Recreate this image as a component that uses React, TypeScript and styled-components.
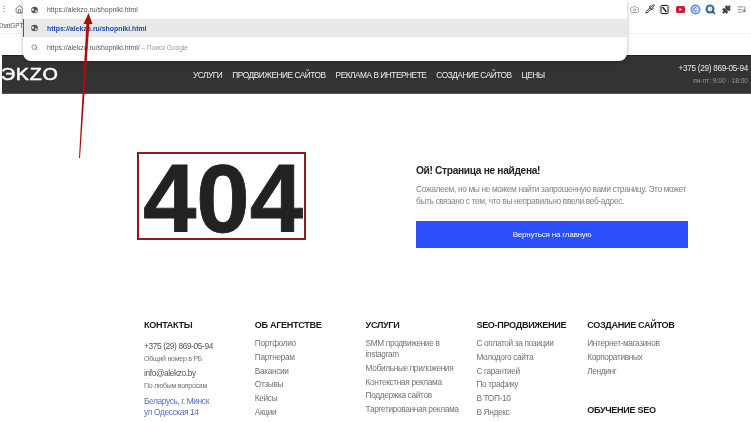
import React from "react";
import styled, { createGlobalStyle } from "styled-components";
import { House, Camera, Pipette, Puzzle, Search, ListMusic } from "lucide-react";

const Global = createGlobalStyle`
  html, body { margin: 0; padding: 0; background: #fff; }
  body { width: 751px; height: 422px; overflow: hidden; font-family: "Liberation Sans", Arial, sans-serif; }
  a { text-decoration: none; color: inherit; }
`;

const Page = styled.div`
  position: relative;
  width: 751px;
  height: 422px;
  overflow: hidden;
  background: #fff;
  filter: blur(0.25px);
`;

const BrowserBar = styled.div`
  height: 33px;
  border-bottom: 1px solid #f1f1f1;
  position: relative;
`;

const ToolRow = styled.div`
  height: 18px;
  display: flex;
  align-items: center;
  justify-content: space-between;
`;

const LeftTools = styled.div`
  display: flex;
  align-items: center;
  gap: 7px;
  color: #444;
`;

const Dots = styled.span`
  font-size: 8px;
  color: #555;
  line-height: 1;
`;

const RightTools = styled.div`
  display: flex;
  align-items: center;
  padding-right: 2px;
`;

const ToolSlot = styled.span`
  width: 15.3px;
  height: 15px;
  display: flex;
  align-items: center;
  justify-content: center;
`;

const BookmarkRow = styled.div`
  height: 15px;
  display: flex;
  align-items: center;
  font-size: 6.3px;
  color: #555;
  margin-left: -3px;
`;

const Omnibox = styled.div`
  position: absolute;
  left: 23px;
  top: 0;
  width: 604px;
  height: 61px;
  background: #fff;
  border-radius: 0 0 8px 8px;
  box-shadow: 0 1px 4px rgba(0, 0, 0, 0.28);
  z-index: 3;
  display: flex;
  flex-direction: column;
`;

const OmniRow = styled.div<{ $active?: boolean; $h: number }>`
  height: ${(p) => p.$h}px;
  display: flex;
  align-items: center;
  gap: 9px;
  padding-left: 7px;
  box-sizing: border-box;
  background: ${(p) => (p.$active ? "#e9e9e9" : "transparent")};
  border-left: 1.5px solid ${(p) => (p.$active ? "#2a5bc4" : "transparent")};
  font-size: 6.9px;
  color: #555;
  white-space: nowrap;
`;

const OmniIcon = styled.span`
  width: 7px;
  display: flex;
  justify-content: center;
  color: #666;
`;

const OmniLink = styled.span`
  color: #1d4a9e;
  font-weight: 700;
`;

const OmniHint = styled.span`
  color: #999;
  font-size: 6.5px;
`;

const SiteHeader = styled.header`
  margin: 21px 0 0 2px;
  height: 39px;
  box-sizing: border-box;
  background: #333;
  border-top: 1px solid #222;
  border-bottom: 1px solid #555;
  display: flex;
  align-items: center;
  color: #fff;
  overflow: hidden;
`;

const LogoSlot = styled.div`
  width: 191px;
  flex: none;
`;

const Logo = styled.div`
  font-size: 17px;
  line-height: 20px;
  margin-left: -1px;
  letter-spacing: 0.6px;
  -webkit-text-stroke: 0.5px #fff;
  white-space: nowrap;
  transform: scaleX(1.16);
  transform-origin: left center;
`;

const Nav = styled.nav`
  display: flex;
  gap: 10px;
  flex: 1;
  font-size: 8.3px;
  letter-spacing: -0.47px;
  color: #eee;
  white-space: nowrap;
`;

const HeaderContact = styled.div`
  text-align: right;
  padding-right: 3px;
  margin-top: -1px;
`;

const HeaderPhone = styled.div`
  font-size: 8.2px;
  letter-spacing: -0.28px;
  color: #e6e6e6;
  line-height: 12px;
`;

const HeaderHours = styled.div`
  font-size: 6.6px;
  color: #999;
  line-height: 11px;
`;

const Main = styled.main`
  display: flex;
  align-items: flex-start;
  margin-top: 58px;
  padding-left: 137px;
`;

const ErrorBox = styled.div`
  width: 169px;
  height: 88px;
  box-sizing: border-box;
  border: 2px solid #8f1d1d;
  padding: 5px 0 0 3px;
  display: flex;
  align-items: center;
  justify-content: center;
  font-size: 96px;
  font-weight: 700;
  color: #222;
  line-height: 1;
  -webkit-text-stroke: 0.8px #222;
`;

const Message = styled.div`
  width: 272px;
  margin-left: 110px;
  padding-top: 13px;
`;

const Title = styled.h1`
  margin: 0;
  font-size: 10.2px;
  letter-spacing: -0.33px;
  line-height: 12px;
  font-weight: 700;
  color: #222;
`;

const Text = styled.p`
  margin: 6px 0 0;
  font-size: 8.4px;
  letter-spacing: -0.36px;
  line-height: 12px;
  color: #7f838c;
`;

const BackButton = styled.a`
  display: flex;
  align-items: center;
  justify-content: center;
  height: 27px;
  margin-top: 14px;
  background: #2b50fb;
  color: #f2f4ff;
  font-size: 8.1px;
  letter-spacing: -0.25px;
`;

const Footer = styled.footer`
  display: grid;
  grid-template-columns: repeat(5, 110.8px);
  margin-top: 71px;
  padding-left: 144px;
`;

const Column = styled.div`
  display: flex;
  flex-direction: column;
`;

const Heading = styled.h3<{ $gap?: number }>`
  margin: ${(p) => p.$gap ?? 0}px 0 0;
  font-size: 9.1px;
  line-height: 12px;
  font-weight: 700;
  color: #1c1c1c;
  letter-spacing: -0.33px;
  white-space: nowrap;
`;

const LinkList = styled.div`
  display: flex;
  flex-direction: column;
  margin-top: 7px;
  padding-right: 14px;
`;

const FootLink = styled.a`
  font-size: 8.3px;
  letter-spacing: -0.35px;
  line-height: 11px;
  padding-bottom: 2.8px;
  color: #737373;
`;

const ContactMain = styled.div<{ $top: number }>`
  margin-top: ${(p) => p.$top}px;
  font-size: 8.4px;
  letter-spacing: -0.4px;
  line-height: 11px;
  color: #555;
`;

const ContactNote = styled.div`
  margin-top: 2px;
  font-size: 7px;
  letter-spacing: -0.25px;
  line-height: 10px;
  color: #707070;
`;

const Address = styled.div`
  margin-top: 5px;
  font-size: 8.4px;
  letter-spacing: -0.4px;
  line-height: 11px;
  color: #5570c0;
`;

const ArrowLayer = styled.svg`
  position: absolute;
  left: 0;
  top: 0;
  z-index: 5;
  pointer-events: none;
`;

const NBox = () => (
  <svg width="13" height="13" viewBox="0 0 13 13">
    <circle cx="6.5" cy="6.5" r="6.3" fill="#e6e8ee" />
    <rect x="3" y="2.5" width="7" height="8" rx="1" fill="#fff" stroke="#222" strokeWidth="1" />
    <path d="M4.6 4 L8.4 9" stroke="#222" strokeWidth="1.5" />
  </svg>
);

const RedPlay = () => (
  <svg width="9" height="7" viewBox="0 0 9 7">
    <rect width="9" height="7" rx="1.5" fill="#c8202a" />
    <path d="M3.4 1.8 L6 3.5 L3.4 5.2 Z" fill="#fff" />
  </svg>
);

const BlueC = () => (
  <svg width="11" height="11" viewBox="0 0 11 11">
    <circle cx="5.5" cy="5.5" r="5" fill="#5c93e6" />
    <circle cx="5.5" cy="5.5" r="3.2" fill="#eef3fb" />
    <path d="M6.8 4.3 A1.8 1.8 0 1 0 6.8 6.7" fill="none" stroke="#23457f" strokeWidth="0.9" />
  </svg>
);

const GlobeBadge = () => (
  <svg width="11" height="11" viewBox="0 0 11 11">
    <circle cx="5" cy="5" r="4.5" fill="#3c6f88" />
    <circle cx="5" cy="5" r="2.4" fill="#dfe8ee" />
    <path d="M7 7 L10 10" stroke="#29485a" strokeWidth="1.5" />
  </svg>
);

const DarkGlobe = () => (
  <svg width="8" height="8" viewBox="0 0 8 8">
    <circle cx="4" cy="4" r="3.8" fill="#555" />
    <path d="M1 2.6 Q3 2 3.6 3.4 L2.6 5 L1 4.2 Z M4.8 4.4 L7 4.6 L5.6 7 L4.6 6 Z" fill="#f1f1f1" />
  </svg>
);

const nav = ["УСЛУГИ", "ПРОДВИЖЕНИЕ САЙТОВ", "РЕКЛАМА В ИНТЕРНЕТЕ", "СОЗДАНИЕ САЙТОВ", "ЦЕНЫ"];

const App: React.FC = () => (
  <Page>
    <Global />
    <BrowserBar>
      <ToolRow>
        <LeftTools>
          <Dots>⋮</Dots>
          <House size={9} strokeWidth={1.8} />
        </LeftTools>
        <RightTools>
          <ToolSlot><Camera size={9} color="#888" strokeWidth={2} /></ToolSlot>
          <ToolSlot><Pipette size={10} color="#222" strokeWidth={2.4} /></ToolSlot>
          <ToolSlot><NBox /></ToolSlot>
          <ToolSlot><RedPlay /></ToolSlot>
          <ToolSlot><BlueC /></ToolSlot>
          <ToolSlot><GlobeBadge /></ToolSlot>
          <ToolSlot><Puzzle size={9} color="#444" fill="#444" /></ToolSlot>
          <ToolSlot><ListMusic size={9} color="#666" strokeWidth={2} /></ToolSlot>
        </RightTools>
      </ToolRow>
      <BookmarkRow>ChatGPT</BookmarkRow>
    </BrowserBar>
    <Omnibox>
      <OmniRow $h={19}>
        <OmniIcon><DarkGlobe /></OmniIcon>
        https://alekzo.ru/shopniki.html
      </OmniRow>
      <OmniRow $active $h={18}>
        <OmniIcon><DarkGlobe /></OmniIcon>
        <OmniLink>https://alekzo.ru/shopniki.html</OmniLink>
      </OmniRow>
      <OmniRow $h={20}>
        <OmniIcon><Search size={7} strokeWidth={2.4} /></OmniIcon>
        <span>https://alekzo.ru/shopniki.html/ <OmniHint>– Поиск Google</OmniHint></span>
      </OmniRow>
    </Omnibox>

    <SiteHeader>
      <LogoSlot><Logo>ЭKZO</Logo></LogoSlot>
      <Nav>
        {nav.map((n) => <a key={n}>{n}</a>)}
      </Nav>
      <HeaderContact>
        <HeaderPhone>+375 (29) 869-05-94</HeaderPhone>
        <HeaderHours>пн-пт: 9:00 - 18:00</HeaderHours>
      </HeaderContact>
    </SiteHeader>

    <Main>
      <ErrorBox>404</ErrorBox>
      <Message>
        <Title>Ой! Страница не найдена!</Title>
        <Text>Сожалеем, но мы не можем найти запрошенную вами страницу. Это может быть связано с тем, что вы неправильно ввели веб-адрес.</Text>
        <BackButton>Вернуться на главную</BackButton>
      </Message>
    </Main>

    <Footer>
      <Column>
        <Heading>КОНТАКТЫ</Heading>
        <ContactMain $top={10}>+375 (29) 869-05-94</ContactMain>
        <ContactNote>Общий номер в РБ</ContactNote>
        <ContactMain $top={4}>info@alekzo.by</ContactMain>
        <ContactNote>По любым вопросам</ContactNote>
        <Address>Беларусь, г. Минск<br />ул Одесская 14</Address>
        <ContactNote>Бизнес-центр</ContactNote>
      </Column>
      <Column>
        <Heading>ОБ АГЕНТСТВЕ</Heading>
        <LinkList>
          {["Портфолио", "Партнерам", "Вакансии", "Отзывы", "Кейсы", "Акции", "Блог"].map((t) => <FootLink key={t}>{t}</FootLink>)}
        </LinkList>
      </Column>
      <Column>
        <Heading>УСЛУГИ</Heading>
        <LinkList>
          {["SMM продвижение в instagram", "Мобильные приложения", "Контекстная реклама", "Поддержка сайтов", "Таргетированная реклама"].map((t) => <FootLink key={t}>{t}</FootLink>)}
        </LinkList>
      </Column>
      <Column>
        <Heading>SEO-ПРОДВИЖЕНИЕ</Heading>
        <LinkList>
          {["С оплатой за позиции", "Молодого сайта", "С гарантией", "По трафику", "В ТОП-10", "В Яндекс"].map((t) => <FootLink key={t}>{t}</FootLink>)}
        </LinkList>
      </Column>
      <Column>
        <Heading>СОЗДАНИЕ САЙТОВ</Heading>
        <LinkList>
          {["Интернет-магазинов", "Корпоративных", "Лендинг"].map((t) => <FootLink key={t}>{t}</FootLink>)}
        </LinkList>
        <Heading $gap={25}>ОБУЧЕНИЕ SEO</Heading>
      </Column>
    </Footer>

    <ArrowLayer width="751" height="422" viewBox="0 0 751 422">
      <path d="M79 158 L80 158 L89.5 22 L86.5 22 Z" fill="#ad0d0d" />
      <path d="M83.5 24 L88.5 13 L92.5 24 Z" fill="#ad0d0d" />
    </ArrowLayer>
  </Page>
);

export default App;
